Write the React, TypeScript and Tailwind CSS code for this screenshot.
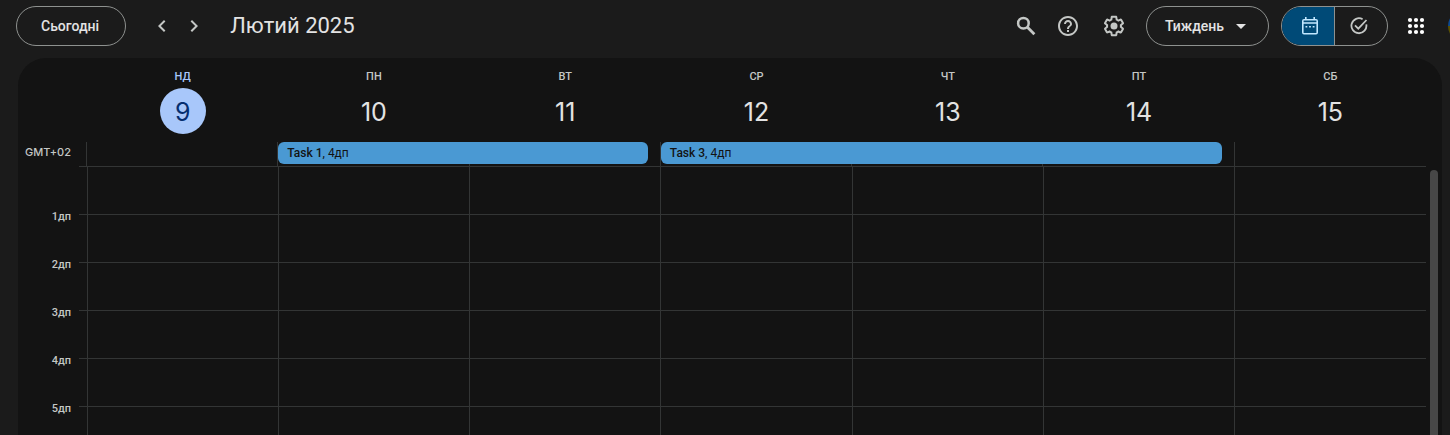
import { MdArrowDropDown, MdChevronLeft, MdChevronRight, MdHelpOutline } from "react-icons/md";

type Day = { name: string; date: number; today?: boolean };
type Task = { title: string; time: string; place: string };

const days: Day[] = [
  { name: "НД", date: 9, today: true },
  { name: "ПН", date: 10 },
  { name: "ВТ", date: 11 },
  { name: "СР", date: 12 },
  { name: "ЧТ", date: 13 },
  { name: "ПТ", date: 14 },
  { name: "СБ", date: 15 },
];

const tasks: Task[] = [
  { title: "Task 1", time: "4дп", place: "col-start-2 col-span-2" },
  { title: "Task 3", time: "4дп", place: "col-start-4 col-span-3" },
];

const hours = ["1дп", "2дп", "3дп", "4дп", "5дп"];
const rows = [0, 1, 2, 3, 4, 5];

function SearchIcon() {
  return (
    <svg viewBox="0 0 24 24" className="size-6" fill="none" stroke="currentColor">
      <circle cx="9.4" cy="9.2" r="5.3" strokeWidth="2.5" />
      <path d="M13.200 13l7.200 7.200" strokeWidth="2.8" />
    </svg>
  );
}

function GearIcon() {
  return (
    <svg viewBox="0 0 24 24" className="size-6" fill="currentColor">
      <path d="M13.85 22.25h-3.7c-.74 0-1.36-.54-1.45-1.27l-.27-1.89c-.27-.14-.53-.29-.79-.46l-1.8.72c-.7.26-1.47-.03-1.81-.65L2.2 15.53c-.35-.66-.2-1.44.36-1.88l1.53-1.19c-.01-.15-.02-.3-.02-.46 0-.15.01-.31.02-.46l-1.52-1.19c-.59-.45-.74-1.26-.37-1.88l1.85-3.19c.34-.62 1.11-.9 1.79-.63l1.81.73c.26-.17.52-.32.78-.46l.27-1.91c.09-.7.71-1.25 1.44-1.25h3.7c.74 0 1.36.54 1.45 1.27l.27 1.89c.27.14.53.29.79.46l1.8-.72c.71-.26 1.48.03 1.82.65l1.84 3.18c.36.66.2 1.44-.36 1.88l-1.52 1.19c.01.15.02.3.02.46s-.01.31-.02.46l1.52 1.19c.56.45.72 1.23.37 1.86l-1.86 3.22c-.34.62-1.11.9-1.8.63l-1.8-.72c-.26.17-.52.32-.78.46l-.27 1.91c-.1.68-.72 1.22-1.46 1.22zm-3.23-2h2.76l.37-2.55.53-.22c.44-.18.88-.44 1.34-.78l.45-.34 2.38.96 1.38-2.4-2.03-1.58.07-.56c.03-.26.06-.51.06-.78s-.03-.53-.06-.78l-.07-.56 2.03-1.58-1.39-2.4-2.39.96-.45-.35c-.42-.32-.87-.58-1.33-.77l-.52-.22-.37-2.55h-2.76l-.37 2.55-.53.21c-.44.19-.88.44-1.34.79l-.45.33-2.38-.95-1.39 2.39 2.03 1.58-.07.56a7 7 0 0 0-.06.79c0 .26.02.53.06.78l.07.56-2.03 1.58 1.38 2.4 2.39-.96.45.35c.43.33.86.58 1.33.77l.53.22z" />
      <circle cx="12" cy="12" r="3.5" />
    </svg>
  );
}

function CalendarIcon() {
  return (
    <svg viewBox="0 0 18 18" className="size-[18px]" fill="currentColor">
      <path
        fillRule="evenodd"
        d="M4 0h1.6v2h6.8V0H14v2h1a2 2 0 0 1 2 2v11.5a2 2 0 0 1-2 2H3a2 2 0 0 1-2-2V4a2 2 0 0 1 2-2h1zM2.600 3.600v1.600h12.800V3.600zM2.600 6.800v9.100h12.800V6.800z"
      />
      <path d="M4.500 9h1.800v1.500H4.500zM8.100 9h1.800v1.500H8.100zM11.700 9h1.800v1.500h-1.800z" />
    </svg>
  );
}

function TaskIcon() {
  return (
    <svg viewBox="0 0 18 18" className="size-[18px]" fill="none" stroke="currentColor" strokeWidth="1.8">
      <path d="M12.600 2.200A7.500 7.500 0 1 0 16.300 7.400" />
      <path d="M5 8.400l3.300 3.300L16.500 3" />
    </svg>
  );
}

function AppsIcon() {
  return (
    <svg viewBox="0 0 24 24" className="size-6" fill="currentColor">
      {[6, 12, 18].map((y) => [6, 12, 18].map((x) => <circle key={`${x}-${y}`} cx={x} cy={y} r="2.1" />))}
    </svg>
  );
}

export default function App() {
  return (
    <div className="flex h-screen flex-col overflow-hidden bg-[#1b1b1b] font-['Roboto','Noto_Sans',sans-serif] text-[#e3e3e3]">
      <header className="flex h-[52px] shrink-0 items-center overflow-hidden pl-4">
        <button className="h-10 rounded-full border border-[#8e918f] pr-[26px] pl-6 text-sm font-medium">Сьогодні</button>
        <div className="ml-5 flex text-[#c4c7c5]">
          <button aria-label="Попередній тиждень" className="grid size-8 place-items-center">
            <MdChevronLeft className="size-6" />
          </button>
          <button aria-label="Наступний тиждень" className="grid size-8 place-items-center">
            <MdChevronRight className="size-6" />
          </button>
        </div>
        <h1 className="ml-5 text-[22px] leading-7">Лютий 2025</h1>

        <div className="ml-auto flex shrink-0 items-center text-[#c4c7c5]">
          <button aria-label="Пошук" className="grid size-10 place-items-center">
            <SearchIcon />
          </button>
          <button aria-label="Підтримка" className="grid h-10 w-11 place-items-center">
            <MdHelpOutline className="size-6" />
          </button>
          <button aria-label="Налаштування" className="grid size-12 place-items-center">
            <GearIcon />
          </button>
          <button className="ml-2 flex h-10 items-center gap-[5px] rounded-full border border-[#8e918f] pr-[15px] pl-[18px] text-sm font-medium text-[#e3e3e3]">
            Тиждень
            <MdArrowDropDown className="size-6" />
          </button>
          <div className="ml-3 flex h-10 overflow-hidden rounded-full border border-[#8e918f]">
            <button aria-label="Календар" className="grid w-[53px] place-items-center border-r border-[#8e918f] bg-[#004a77] pl-1 text-[#c2e7ff]">
              <CalendarIcon />
            </button>
            <button aria-label="Завдання" className="grid w-[52px] place-items-center pr-1">
              <TaskIcon />
            </button>
          </div>
          <button aria-label="Додатки Google" className="ml-2 grid size-10 place-items-center text-white">
            <AppsIcon />
          </button>
          <div className="ml-3 h-8 w-[2px] overflow-hidden">
            <div className="size-8 rounded-full bg-linear-to-b from-[#0b4a94] from-50% to-[#5c5200] to-50%" />
          </div>
        </div>
      </header>

      <main className="mt-[6px] mr-2 ml-[18px] flex min-h-0 flex-1 flex-col rounded-t-[28px] bg-[#131313]">
        <div className="mr-4 grid shrink-0 grid-cols-7 pt-[11px] pb-2 pl-[69px]">
          {days.map((day) => (
            <div key={day.name} className="flex flex-col items-center gap-[3px]">
              <span className={day.today ? "text-[11px] leading-4 font-medium text-[#a8c7fa]" : "text-[11px] leading-4 font-medium text-[#c4c7c5]"}>
                {day.name}
              </span>
              <span
                className={
                  day.today
                    ? "grid size-[46px] place-items-center rounded-full bg-[#a8c7fa] pt-px font-['Inter','Roboto',sans-serif] text-[25px] leading-9 text-[#062e6f]"
                    : "grid size-[46px] place-items-center pt-px font-['Inter','Roboto',sans-serif] text-[25px] leading-9"
                }
              >
                {day.date}
              </span>
            </div>
          ))}
        </div>

        <div className="mr-[17px] flex h-6 shrink-0">
          <div className="w-[68px] pr-[15px] text-right font-['Inter','Roboto',sans-serif] text-[11px] leading-5 font-medium text-[#c4c7c5]">
            GMT+02
          </div>
          <div className="grid flex-1 grid-cols-7 grid-rows-[24px]">
            {days.map((day, i) => (
              <div key={day.name} className="row-start-1 border-l border-[#333535]" style={{ gridColumnStart: i + 1 }} />
            ))}
            {tasks.map((task) => (
              <button
                key={task.title}
                className={`${task.place} z-10 row-start-1 mr-3 ml-px h-[22px] rounded-md bg-[#4a99d3] px-[9px] text-left text-xs text-[#131313]`}
              >
                <span className="font-medium">{task.title}</span>, {task.time}
              </button>
            ))}
          </div>
        </div>

        <div className="flex min-h-0 flex-1 overflow-hidden">
          <div className="w-[61px] shrink-0 pt-[27px] pr-2 text-right text-[11px] font-medium text-[#c4c7c5]">
            {hours.map((hour) => (
              <div key={hour} className="flex h-12 items-center justify-end">
                {hour}
              </div>
            ))}
          </div>
          <div className="flex-1">
            {rows.map((row) => (
              <div key={row} className="grid h-12 grid-cols-7 border-t border-[#333535] pr-px pl-2">
                {days.map((day) => (
                  <div key={day.name} className="border-l border-[#333535]" />
                ))}
              </div>
            ))}
          </div>
          <div className="w-4 shrink-0 px-1 pt-1">
            <div className="h-full rounded-t-full bg-[#474747]" />
          </div>
        </div>
      </main>
    </div>
  );
}
